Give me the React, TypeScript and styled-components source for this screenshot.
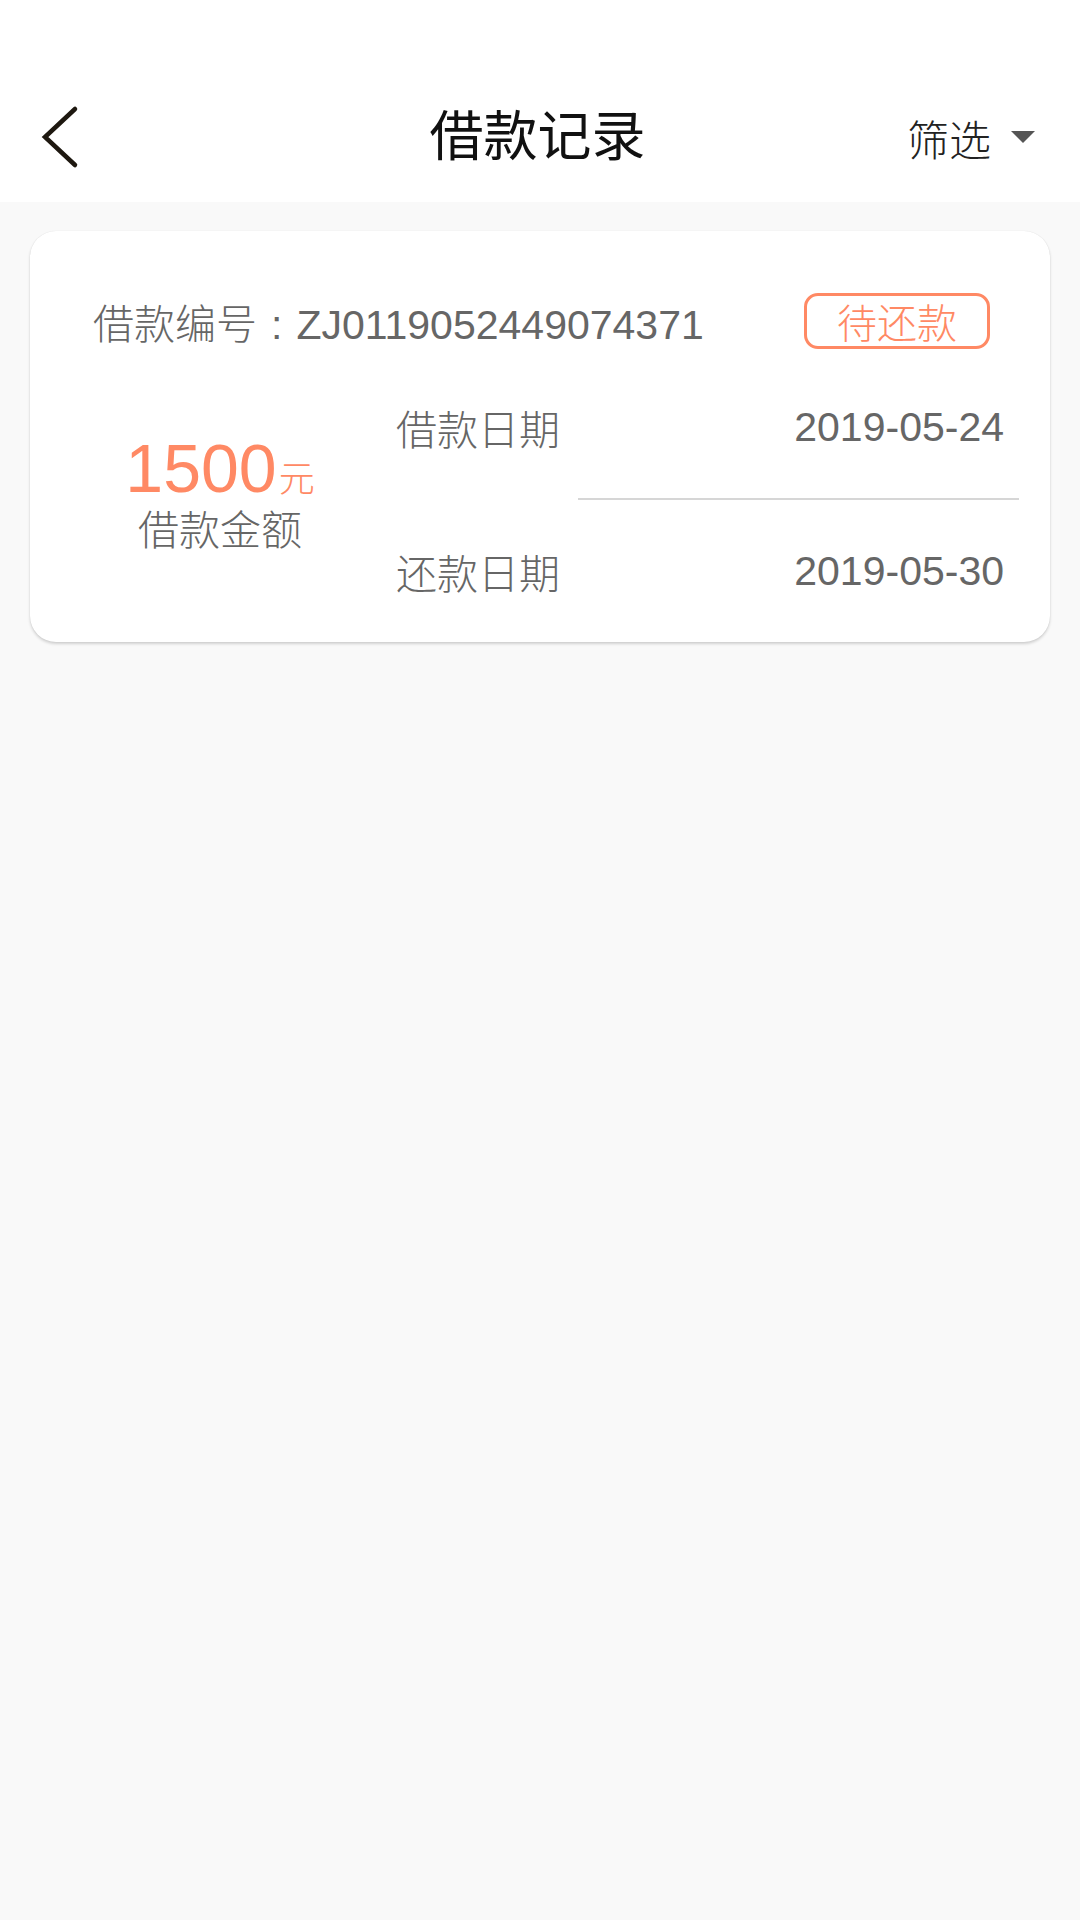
import styled, { createGlobalStyle } from 'styled-components';

const GlobalStyle = createGlobalStyle`
  html, body {
    margin: 0;
    padding: 0;
    background: #f9f9f9;
  }
  body {
    font-family: "Liberation Sans", "Noto Sans CJK SC", sans-serif;
    font-weight: 300;
  }
`;

const Page = styled.div`
  width: 1080px;
  min-height: 1920px;
  background: #f9f9f9;
`;

const StatusBar = styled.div`
  height: 72px;
  background: #fff;
`;

const NavBar = styled.header`
  height: 130px;
  background: #fff;
  display: grid;
  grid-template-columns: 1fr auto 1fr;
  align-items: center;
  padding: 0 45px 0 40px;
`;

const BackButton = styled.button`
  justify-self: start;
  background: none;
  border: 0;
  padding: 0;
  display: flex;
  cursor: pointer;
`;

const Title = styled.h1`
  margin: 0;
  font-size: 54px;
  font-weight: 400;
  color: #111;
  line-height: 1;
`;

const Filter = styled.div`
  justify-self: end;
  display: flex;
  align-items: center;
  gap: 20px;
  font-size: 42px;
  color: #222;
`;

const Caret = styled.span`
  width: 0;
  height: 0;
  border-left: 12px solid transparent;
  border-right: 12px solid transparent;
  border-top: 12px solid #555;
`;

const List = styled.main`
  padding: 29px 30px;
`;

const Card = styled.section`
  background: #fff;
  border-radius: 26px;
  box-shadow: 0 0 1px rgba(0, 0, 0, 0.12), 0 2px 3px rgba(0, 0, 0, 0.16);
  padding-top: 62px;
`;

const TopRow = styled.div`
  display: flex;
  align-items: center;
  justify-content: space-between;
  padding: 0 60px 0 63px;
  height: 56px;
`;

const LoanNo = styled.span`
  font-size: 41px;
  color: #666;
`;

const Colon = styled.span`
  padding: 0 14px;
`;

const Badge = styled.span`
  box-sizing: border-box;
  width: 186px;
  height: 56px;
  border: 3px solid #ff8964;
  border-radius: 14px;
  color: #ff8964;
  font-size: 40px;
  display: flex;
  align-items: center;
  justify-content: center;
`;

const Body = styled.div`
  display: grid;
  grid-template-columns: 366px 623px;
  margin-top: 7px;
`;

const AmountCol = styled.div`
  padding-left: 14px;
  display: flex;
  flex-direction: column;
  align-items: center;
  justify-content: center;
  padding-bottom: 6px;
`;

const Amount = styled.div`
  color: #ff8964;
  font-size: 68px;
  line-height: 58px;
  display: flex;
  align-items: baseline;
`;

const Unit = styled.span`
  font-size: 36px;
  margin-left: 2px;
`;

const AmountLabel = styled.div`
  font-size: 41px;
  color: #666;
  line-height: 44px;
`;

const DatesCol = styled.div`
  display: flex;
  flex-direction: column;
`;

const DateRow = styled.div`
  height: 142px;
  display: flex;
  align-items: center;
  justify-content: space-between;
  padding-right: 15px;
  font-size: 41px;
  color: #666;
`;

const Divider = styled.div`
  height: 2px;
  background: #d6d6d6;
  margin-left: 182px;
`;

const ChevronLeft = () => (
  <svg width="40" height="64" viewBox="0 0 40 64" fill="none">
    <polyline
      points="35,4 5,32 35,60"
      stroke="#1e1810"
      strokeWidth="4.5"
      strokeLinecap="round"
      strokeLinejoin="miter"
    />
  </svg>
);

const loan = {
  no: 'ZJ0119052449074371',
  status: '待还款',
  amount: 1500,
  loanDate: '2019-05-24',
  repayDate: '2019-05-30',
};

export default function App() {
  return (
    <Page>
      <GlobalStyle />
      <StatusBar />
      <NavBar>
        <BackButton aria-label="返回">
          <ChevronLeft />
        </BackButton>
        <Title>借款记录</Title>
        <Filter>
          筛选
          <Caret />
        </Filter>
      </NavBar>
      <List>
        <Card>
          <TopRow>
            <LoanNo>
              借款编号<Colon>:</Colon>
              {loan.no}
            </LoanNo>
            <Badge>{loan.status}</Badge>
          </TopRow>
          <Body>
            <AmountCol>
              <Amount>
                {loan.amount}
                <Unit>元</Unit>
              </Amount>
              <AmountLabel>借款金额</AmountLabel>
            </AmountCol>
            <DatesCol>
              <DateRow>
                <span>借款日期</span>
                <span>{loan.loanDate}</span>
              </DateRow>
              <Divider />
              <DateRow>
                <span>还款日期</span>
                <span>{loan.repayDate}</span>
              </DateRow>
            </DatesCol>
          </Body>
        </Card>
      </List>
    </Page>
  );
}
